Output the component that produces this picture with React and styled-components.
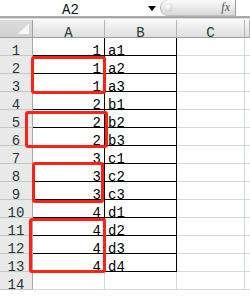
import React from "react";
import styled, { createGlobalStyle } from "styled-components";

const Global = createGlobalStyle`
  html, body { margin: 0; padding: 0; background: #fff; }
  body { width: 250px; height: 296px; overflow: hidden; font-family: "Liberation Mono", "DejaVu Sans Mono", monospace; }
`;

const Page = styled.div`
  width: 250px;
  height: 296px;
  display: flex;
  flex-direction: column;
  background: #fff;
`;

const FormulaBar = styled.div`
  height: 16px;
  display: flex;
  align-items: stretch;
  border-bottom: 2px solid #a9a9a9;
  box-shadow: 0 1px 0 #d8d8d8;
`;

const NameBox = styled.div`
  width: 145px;
  display: flex;
  align-items: flex-start;
  padding-left: 62px;
  box-sizing: border-box;
  font-size: 14px;
  color: #111;
`;

const NameText = styled.span`
  line-height: 12px;
  padding-top: 4px;
`;

const Arrow = styled.div`
  width: 14px;
  display: flex;
  align-items: center;
  justify-content: center;
  padding-top: 1px;
`;

const Pill = styled.div`
  width: 76px;
  margin-left: 1px;
  display: flex;
  align-items: stretch;
  position: relative;
  box-sizing: border-box;
  border-radius: 9px 0 0 9px;
  background: linear-gradient(#fbfbfb, #e8e8e8 55%, #d9d9d9);
  border-left: 1px solid #b0b0b0;
  border-right: 1px solid #9c9c9c;
  border-bottom: 1px solid #c0c0c0;
`;

const Knob = styled.div`
  position: absolute;
  left: 3px;
  top: 3px;
  width: 9px;
  height: 9px;
  border-radius: 50%;
  background: radial-gradient(circle at 40% 35%, #ffffff, #d0d4d8 70%, #b0b4b8);
`;

const Fx = styled.span`
  margin-left: auto;
  margin-right: 5px;
  font-family: "Liberation Serif", serif;
  font-style: italic;
  font-size: 12px;
  color: #555;
  line-height: 15px;
`;

const Gap = styled.div`
  height: 2px;
`;

const SheetWrap = styled.div`
  position: relative;
`;

const Grid = styled.div`
  display: grid;
  grid-template-columns: 33px 72px 72px 68px 5px;
  grid-auto-rows: 18px;
`;

const textBox = `
  box-sizing: border-box;
  font-size: 14px;
  display: flex;
  align-items: flex-start;
  padding-top: 7px;
  line-height: 12px;
  white-space: nowrap;
`;

const Cell = styled.div`
  ${textBox}
  border-right: 1px solid ${(p) => (p.$black ? "#000" : "#d0d7e5")};
  border-bottom: 1px solid ${(p) => (p.$black ? "#000" : "#d0d7e5")};
  color: #000;
  justify-content: ${(p) => (p.$right ? "flex-end" : "flex-start")};
  padding-left: 3px;
  padding-right: 3px;
`;

const ColHead = styled.div`
  ${textBox}
  background: linear-gradient(#f8f8f8, #ebebeb 50%, #dfdfdf);
  border-right: 1px solid #b4b4b4;
  border-bottom: 1px solid #9e9e9e;
  color: #1e3a35;
  justify-content: center;
`;

const Corner = styled(ColHead)`
  position: relative;
  background: linear-gradient(#dcdcdc, #d0d0d0);
  border-right: 1px solid #a0a0a0;
`;

const CornerTri = styled.div`
  position: absolute;
  right: 3px;
  bottom: 3px;
  width: 0;
  height: 0;
  border-left: 11px solid transparent;
  border-bottom: 11px solid #f6f6f6;
`;

const RowHead = styled.div`
  ${textBox}
  background: #e9e9e9;
  border-right: 1px solid #a8a8a8;
  border-bottom: 1px solid #c6c6c6;
  color: #1e3a35;
  justify-content: center;
`;

const RedBox = styled.div`
  position: absolute;
  box-sizing: border-box;
  border: 3px solid #fb2216;
  border-radius: 3px;
  pointer-events: none;
`;

const rows = [
  [1, "a1"], [1, "a2"], [1, "a3"], [2, "b1"], [2, "b2"], [2, "b3"],
  [3, "c1"], [3, "c2"], [3, "c3"], [4, "d1"], [4, "d2"], [4, "d3"], [4, "d4"],
];

// boxes relative to sheet top (sheet starts at y=20)
const boxes = [
  { left: 31, top: 36, width: 75, height: 38 },
  { left: 25, top: 91, width: 83, height: 37 },
  { left: 32, top: 142, width: 72, height: 41 },
  { left: 29, top: 198, width: 77, height: 55 },
];

export default function App() {
  return (
    <Page>
      <Global />
      <FormulaBar>
        <NameBox>
          <NameText>A2</NameText>
        </NameBox>
        <Arrow>
          <svg width="8" height="5" viewBox="0 0 8 5">
            <path d="M0 0 H8 L4 5 Z" fill="#000" />
          </svg>
        </Arrow>
        <Pill>
          <Knob />
          <Fx>fx</Fx>
        </Pill>
      </FormulaBar>
      <Gap />
      <SheetWrap>
        <Grid>
          <Corner>
            <CornerTri />
          </Corner>
          <ColHead>A</ColHead>
          <ColHead>B</ColHead>
          <ColHead>C</ColHead>
          <ColHead />
          {rows.map(([n, t], i) => (
            <React.Fragment key={i}>
              <RowHead>{i + 1}</RowHead>
              <Cell $black $right>{n}</Cell>
              <Cell $black>{t}</Cell>
              <Cell />
              <Cell />
            </React.Fragment>
          ))}
          <RowHead>14</RowHead>
          <Cell />
          <Cell />
          <Cell />
          <Cell />
        </Grid>
        {boxes.map((b, i) => (
          <RedBox key={i} style={b} />
        ))}
      </SheetWrap>
    </Page>
  );
}
